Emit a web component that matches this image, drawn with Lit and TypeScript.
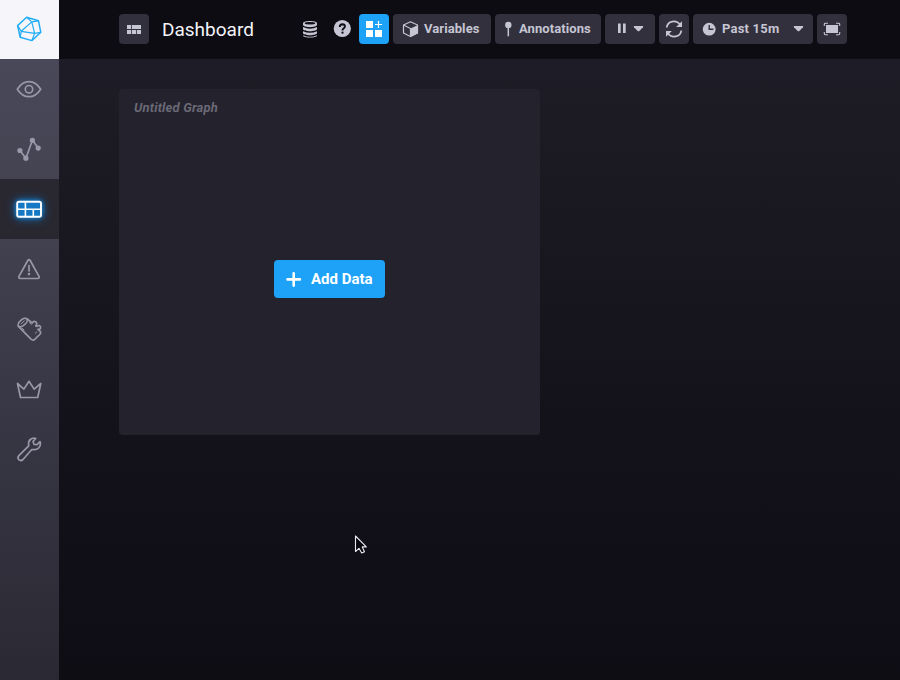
import { LitElement, html, css, svg } from "lit";
import { customElement, property } from "lit/decorators.js";

const icons: Record<string, { box: string; art: unknown }> = {
  logo: {
    box: "14 14 30 30",
    art: svg`<g fill="none" stroke="#22adf6" stroke-width="1.5" stroke-linejoin="round">
      <path d="M26.600 17.300 38.500 20.800 40.800 32.300 31.800 40.600 20.200 37.300 17.600 25.600Z"/>
      <path d="M26.600 17.300 31.800 21.900 38.500 20.800M31.800 21.900 21.200 31.300 17.600 25.600M31.800 21.900 34.600 33.400 40.800 32.300M21.200 31.300 34.600 33.400 31.800 40.600M21.200 31.300 20.200 37.300" stroke-width="1.200"/></g>`,
  },
  eye: {
    box: "14 74 30 30",
    art: svg`<path d="M17.300 89.200C20.300 84.500 24.300 81.700 29 81.700s8.700 2.800 11.700 7.500c-3 4.700-7 7.500-11.700 7.500s-8.700-2.800-11.700-7.500Z" class="line"/><circle cx="29" cy="89.200" r="3.700" class="line"/>`,
  },
  graph: {
    box: "14 134 30 30",
    art: svg`<path d="M19.900 150.500 25.900 158.200 32.400 140.300 38.200 148.100" class="line"/><g fill="currentColor"><circle cx="19.900" cy="150.500" r="2.600"/><circle cx="25.900" cy="158.200" r="2.600"/><circle cx="32.400" cy="140.300" r="2.600"/><circle cx="38.200" cy="148.100" r="2.600"/></g>`,
  },
  dash: {
    box: "14 194 30 30",
    art: svg`<rect x="17.200" y="201.700" width="23.800" height="15" rx="1.800" fill="#1578c4" stroke="#fff" stroke-width="1.900"/><path d="M17.200 209.200H41M25.400 201.700V209.200M25.400 209.200V216.700M33.300 209.200V216.700" stroke="#fff" stroke-width="1.600"/>`,
  },
  alert: {
    box: "14 254 30 30",
    art: svg`<path d="M27.800 260.500Q29 258.700 30.200 260.500L39 276.300Q39.900 278.400 37.700 278.500H20.300Q18.100 278.400 19 276.300Z" class="line"/><path d="M29 265.500V271" class="line"/><circle cx="29" cy="274.100" r="1.300" fill="currentColor"/>`,
  },
  log: {
    box: "14 314 30 30",
    art: svg`<path d="M18.400 326.400 31 339.200Q33 340.900 34.700 339.400L39.700 334.500Q41.500 332.700 39.900 331.200L37.900 329.400Q41 329.400 40.500 326.900 39.700 324.800 37.500 325.900 36.900 326.600 35.800 326 37.800 322.800 35.600 321.700 33.400 320.800 32.200 323L26.900 318.700" class="line"/><ellipse cx="22.700" cy="322.500" rx="5.500" ry="2.900" transform="rotate(-41 22.700 322.500)" class="line"/><path d="M21 323.900 24.400 320.900M22 328 24 330M29.300 322.500 31.400 324.500M35.300 333.200 36.700 332" class="line thin"/>`,
  },
  crown: {
    box: "14 374 30 30",
    art: svg`<path d="M17.500 383.500 20.500 397.500H37.700L40.800 383.500 34.200 389.100 29 381.300 23.900 389.100Z" class="line"/>`,
  },
  wrench: {
    box: "14 434 30 30",
    art: svg`<path d="M35.800 438.500Q32.800 437.400 30.300 439.500 28 441.600 28.700 445.800L18.900 455.600Q17.100 457.600 18.800 459.700 20.900 461.400 23 459.500L31.800 449.500Q36.600 450.300 38.900 447.700 41.200 444.800 40 441.600L36.900 444.700 34 444.300 33 441.500Z" class="line"/>`,
  },
  grid: {
    box: "124 19 20 20",
    art: svg`<path d="M127 25h4.200v4H127zM132 25h9v4h-9zM127 30h4.200v4H127zM132 30h4.200v4H132zM137 30h4v4h-4z" fill="currentColor"/>`,
  },
  database: {
    box: "300 19 20 20",
    art: svg`<g fill="currentColor"><path d="M303 23.300C303 20.200 317 20.200 317 23.300V24.800C317 28 303 28 303 24.800Z"/><path d="M303 27Q310 30.300 317 27V29.100C317 32 303 32 303 29.100ZM303 31.200Q310 34.500 317 31.200V33.100C317 36 303 36 303 33.100ZM303 35.200Q310 38.300 317 35.200V35.500C317 38.200 303 38.200 303 35.500Z"/></g><ellipse cx="310" cy="23.300" rx="5.300" ry="1.200" fill="#0f0e15"/>`,
  },
  help: {
    box: "332 19 20 20",
    art: svg`<circle cx="342.300" cy="28.500" r="8.600" fill="currentColor"/><path d="M339.800 26.900Q339.800 24.300 342.400 24.300 344.900 24.400 344.900 26.500 344.900 27.600 343.500 28.600 342.500 29.300 342.500 30.400" fill="none" stroke="#0f0e15" stroke-width="1.900"/><circle cx="342.500" cy="32.700" r="1.150" fill="#0f0e15"/>`,
  },
  addcell: {
    box: "364 19 20 20",
    art: svg`<path d="M366 21h7v7h-7zM366 30h7v7h-7zM375 30h7v7h-7zM377.900 21h1.200v2.900h2.900v1.200h-2.900v2.900h-1.200v-2.900H375v-1.200h2.900z" fill="#fff"/>`,
  },
  cube: {
    box: "400 19 20 20",
    art: svg`<path d="M410.500 21.700 417.500 25V33L410.500 36.500 403.500 33V25Z" fill="none" stroke="currentColor" stroke-width="1.200" stroke-linejoin="round"/><path d="M403.500 25 410.500 28.500V36.500" fill="none" stroke="currentColor" stroke-width="1.200"/><path d="M410.500 28.500 418 24.900V33.200L410.500 37Z" fill="currentColor"/>`,
  },
  pin: {
    box: "498 19 20 20",
    art: svg`<circle cx="508.300" cy="24.900" r="3.200" fill="currentColor"/><path d="M508.300 27V36.300" stroke="currentColor" stroke-width="1.500"/>`,
  },
  pause: {
    box: "612 19 20 20",
    art: svg`<path d="M618 23.500h2.700v9.500H618zM623 23.500h2.700v9.500H623z" fill="currentColor"/>`,
  },
  caret: {
    box: "628 19 20 20",
    art: svg`<path d="M634.300 26H642.700Q643.700 26.200 643 27.200L639.300 31Q638.500 31.600 637.700 31L634 27.200Q633.300 26.200 634.300 26Z" fill="currentColor"/>`,
  },
  refresh: {
    box: "664 19 20 20",
    art: svg`<path d="M666.700 27.500C667.500 20.700 676.300 19.200 680.300 25M681.300 30.500C680.500 37.300 671.700 38.800 667.700 33" fill="none" stroke="currentColor" stroke-width="1.800"/><path d="M682 21.200V27.100H676.100ZM666 36.800V30.900H671.900Z" fill="currentColor"/>`,
  },
  clock: {
    box: "699 19 20 20",
    art: svg`<circle cx="709.200" cy="29.200" r="6.400" fill="currentColor"/><path d="M709.200 25V29.200H713.400" fill="none" stroke="#31303c" stroke-width="1.400"/>`,
  },
  full: {
    box: "822 19 20 20",
    art: svg`<path d="M826 25h12v8h-12z" fill="currentColor"/><path d="M828 23.300H825.200Q824.300 23.300 824.300 24.200V26M824.300 32V33.800Q824.300 34.700 825.200 34.700H828M836 23.300H838.800Q839.700 23.300 839.700 24.200V26M839.700 32V33.800Q839.700 34.700 838.800 34.700H836" fill="none" stroke="currentColor" stroke-width="1.100"/>`,
  },
  plus: {
    box: "284 269 20 20",
    art: svg`<path d="M293.700 273.200V285.600M287.500 279.400H299.900" stroke="#fff" stroke-width="2.600" stroke-linecap="round"/>`,
  },
  cursor: {
    box: "350 532 20 24",
    art: svg`<path d="M355.500 536V551.500L359 548.300 361.700 553 364.500 551.700 362.200 546.900H366.300Z" fill="#08080d" stroke="#e9e9f2" stroke-width="1.100" stroke-linejoin="round"/>`,
  },
};

@customElement("ui-icon")
class UiIcon extends LitElement {
  @property() name = "";
  static styles = css`
    :host { display: block; flex: none; }
    .art { display: block; overflow: visible; }
    .line { fill: none; stroke: currentColor; stroke-width: 1.7; stroke-linejoin: round; stroke-linecap: round; }
    .thin { stroke-width: 1; }
  `;
  render() {
    const icon = icons[this.name];
    const [, , w, h] = icon.box.split(" ");
    return html`<svg class="art" width=${w} height=${h} viewBox=${icon.box}>${icon.art}</svg>`;
  }
}

@customElement("app-root")
class AppRoot extends LitElement {
  static styles = css`
    :host {
      display: flex; position: relative; width: 100%; height: 100vh; overflow: hidden;
      font-family: Roboto, "Liberation Sans", sans-serif; color: #c6c5d3;
      background: #0f0e15;
    }
    * { box-sizing: border-box; }
    .sidebar { width: 59px; flex: none; background: linear-gradient(#4b4a5b, #454453 26%, #383745 60%, #2a2933); color: #9998a8; }
    .tab { height: 60px; display: flex; align-items: center; padding-left: 14px; }
    .logo { height: 59px; background: #f6f6fa; padding-bottom: 1px; }
    .active { background: #292831; }
    .active ui-icon { filter: drop-shadow(0 0 2px #1590e8) drop-shadow(0 0 4px #116bb5); }
    .page { flex: 1; min-width: 0; display: flex; flex-direction: column; }
    .header { height: 59px; flex: none; display: flex; align-items: center; background: #0d0c12; padding: 0 53px 1px 60px; }
    .title { margin: 0 auto 0 13px; font-size: 19px; font-weight: 400; line-height: 30px; color: #f3f3f8; padding-top: 1px; }
    .tools { display: flex; gap: 4px; align-items: center; }
    .plain { width: 20px; margin-right: 8px; }
    .help { margin-right: 3px; }
    .btn { height: 30px; border-radius: 4px; background: #31303c; display: flex; align-items: center; font-weight: 700; font-size: 13px; letter-spacing: 0.08px; line-height: 30px; white-space: nowrap; }
    .square { width: 30px; justify-content: center; }
    .primary { background: #1ea2f7; }
    .vars { width: 98px; padding-left: 7px; }
    .notes { width: 106px; padding-left: 3px; }
    .vars .label { margin-left: 4px; }
    .notes .label { margin-left: 1px; }
    .paused { width: 50px; padding-left: 7px; }
    .paused ui-icon + ui-icon { margin-left: -4px; }
    .range { width: 120px; padding: 0 5px 0 6px; }
    .range .label { margin: 0 auto 0 3px; letter-spacing: 0.2px; }
    .canvas { flex: 1; padding: 30px 60px; background: linear-gradient(#1e1c26, #17161e 38%, #13121a 60%, #0e0d14); }
    .cell { width: 421px; height: 346px; border-radius: 4px; background: #24222d; display: flex; flex-direction: column; }
    .name { height: 37px; line-height: 37px; padding-left: 15px; font-size: 13px; letter-spacing: 0.17px; font-weight: 700; font-style: italic; color: #6a6976; }
    .body { flex: 1; display: flex; justify-content: center; padding-top: 134px; }
    .add { width: 111px; height: 38px; border-radius: 4px; background: #1ea2f7; color: #fff; display: flex; align-items: center; padding-left: 10px; font-size: 15px; font-weight: 700; }
    .add .label { margin-left: 7px; }
    .cursor { position: absolute; left: 350px; top: 532px; }
  `;
  render() {
    const tabs = ["eye", "graph", "dash", "alert", "log", "crown", "wrench"];
    return html`
      <nav class="sidebar">
        <div class="tab logo"><ui-icon name="logo"></ui-icon></div>
        ${tabs.map((t) => html`<div class="tab ${t === "dash" ? "active" : ""}"><ui-icon name=${t}></ui-icon></div>`)}
      </nav>
      <main class="page">
        <header class="header">
          <div class="btn square"><ui-icon name="grid"></ui-icon></div>
          <h1 class="title">Dashboard</h1>
          <div class="tools">
            <ui-icon class="plain" name="database"></ui-icon>
            <ui-icon class="help" name="help"></ui-icon>
            <div class="btn square primary"><ui-icon name="addcell"></ui-icon></div>
            <div class="btn vars"><ui-icon name="cube"></ui-icon><span class="label">Variables</span></div>
            <div class="btn notes"><ui-icon name="pin"></ui-icon><span class="label">Annotations</span></div>
            <div class="btn paused"><ui-icon name="pause"></ui-icon><ui-icon name="caret"></ui-icon></div>
            <div class="btn square"><ui-icon name="refresh"></ui-icon></div>
            <div class="btn range"><ui-icon name="clock"></ui-icon><span class="label">Past 15m</span><ui-icon name="caret"></ui-icon></div>
            <div class="btn square"><ui-icon name="full"></ui-icon></div>
          </div>
        </header>
        <section class="canvas">
          <article class="cell">
            <div class="name">Untitled Graph</div>
            <div class="body"><div class="add"><ui-icon name="plus"></ui-icon><span class="label">Add Data</span></div></div>
          </article>
        </section>
      </main>
      <ui-icon class="cursor" name="cursor"></ui-icon>
    `;
  }
}
